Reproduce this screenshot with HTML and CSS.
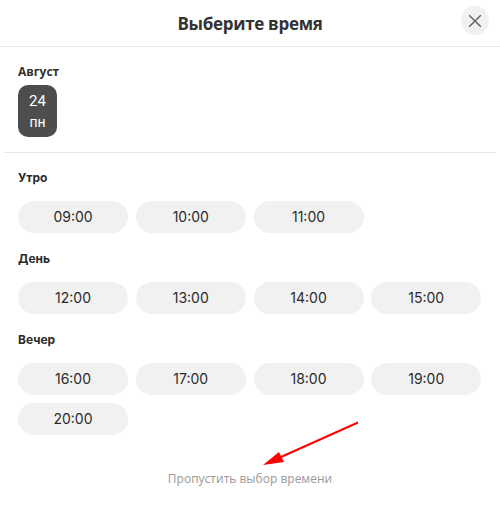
FILE: index.html
```html
<!DOCTYPE html>
<html lang="ru">
<head>
  <meta charset="UTF-8">
  <meta name="viewport" content="width=device-width, initial-scale=1">
  <title>Выберите время</title>
  <link rel="stylesheet" href="styles.css">
</head>

<body>
  <div class="modal">
    <div class="modal-header">
      <h1>Выберите время</h1>
      <button class="close-btn" aria-label="Закрыть">
        <svg width="14" height="14" viewBox="0 0 14 14">
          <path d="M1.2 1.2 L12.8 12.8 M12.8 1.2 L1.2 12.8" stroke="#666" stroke-width="1.5" fill="none"/>
        </svg>
      </button>
    </div>

    <div class="date-block">
      <div class="month">Август</div>
      <div class="day">
        <span class="day-num">24</span>
        <span class="day-name">пн</span>
      </div>
    </div>

    <div class="slots">
      <div class="slot-title">Утро</div>
      <div class="slot-grid">
        <button>09:00</button>
        <button>10:00</button>
        <button>11:00</button>
      </div>

      <div class="slot-title">День</div>
      <div class="slot-grid">
        <button>12:00</button>
        <button>13:00</button>
        <button>14:00</button>
        <button>15:00</button>
      </div>

      <div class="slot-title">Вечер</div>
      <div class="slot-grid">
        <button>16:00</button>
        <button>17:00</button>
        <button>18:00</button>
        <button>19:00</button>
        <button>20:00</button>
      </div>
    </div>

    <a href="#" class="skip-link">Пропустить выбор времени</a>

    <!-- red annotation arrow over the page -->
    <svg class="arrow" width="100" height="48" viewBox="0 0 100 48">
      <path d="M97 1.5 L20 36" stroke="#ff0000" stroke-width="2" fill="none"/>
      <path d="M2 44 L18 31 L23 41 Z" fill="#ff0000"/>
    </svg>
  </div>
</body>
</html>
```

FILE: styles.css
```css
body {
  margin: 0;
  background: #fff;
  color: #2b2b2b;
  font-family: 'Inter', 'Noto Sans', sans-serif;
}

.modal {
  position: relative;
  width: 500px;
  height: 510px;
  overflow: hidden;
}

.modal-header {
  height: 46px;
  border-bottom: 1px solid #e6e6e6;
  display: flex;
  justify-content: center;
  align-items: center;
  position: relative;
}

.modal-header h1 {
  margin: 0;
  font-family: 'Open Sans', sans-serif;
  font-size: 17px;
  font-weight: 700;
  letter-spacing: -0.3px;
  color: #333;
}

.close-btn {
  position: absolute;
  left: 461px;
  top: 6px;
  width: 28px;
  height: 29px;
  padding: 0;
  border: none;
  border-radius: 50%;
  background: #f1f1f1;
  display: flex;
  justify-content: center;
  align-items: center;
}

.date-block {
  margin: 0 4px;
  padding: 18px 14px 15px;
  border-bottom: 1px solid #e6e6e6;
}

.month {
  font-family: 'Open Sans', sans-serif;
  font-size: 12px;
  font-weight: 700;
  line-height: 14px;
  color: #333;
  margin-bottom: 6px;
}

.day {
  width: 39px;
  height: 52px;
  border-radius: 10px;
  background: #4d4d4d;
  color: #fff;
  font-family: 'Roboto', sans-serif;
  display: flex;
  flex-direction: column;
  align-items: center;
  justify-content: center;
}

.day-num {
  font-size: 15px;
  line-height: 22px;
}

.day-name {
  font-size: 14px;
  line-height: 20px;
}

.slots {
  padding: 0 18px;
}

.slot-title {
  font-size: 12px;
  font-weight: 700;
  line-height: 14px;
  padding-top: 18px;
  margin-bottom: 16px;
}

.slot-grid {
  display: grid;
  grid-template-columns: repeat(4, 110px);
  gap: 8px 7.75px;
  margin-bottom: 1px;
}

.slot-grid button {
  height: 32px;
  border: none;
  border-radius: 16px;
  background: #f1f1f1;
  color: #2b2b2b;
  font-family: inherit;
  font-size: 14px;
  padding: 0 0 1px;
}

.skip-link {
  display: block;
  margin-top: 36px;
  text-align: center;
  font-family: 'Open Sans', sans-serif;
  font-size: 12px;
  line-height: 16px;
  color: #999;
  text-decoration: none;
}

.arrow {
  position: absolute;
  left: 261px;
  top: 421px;
}
```
